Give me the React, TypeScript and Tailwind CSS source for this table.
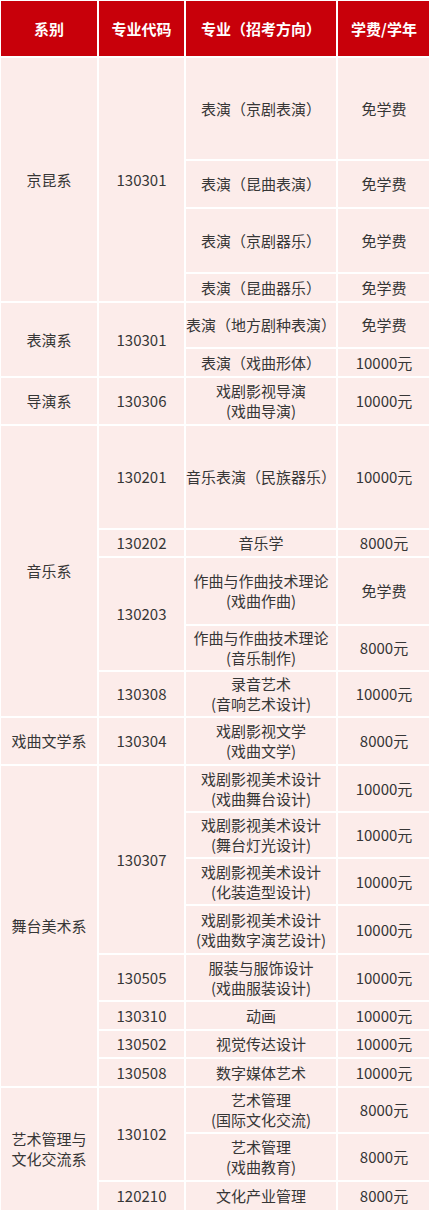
import * as React from "react";

type Cell = { text: string[]; span?: number };
type Row = { h: number; dept?: Cell; code?: Cell; major: string[]; fee: string };

const rows: Row[] = [
  { h: 103, dept: { text: ["京昆系"], span: 4 }, code: { text: ["130301"], span: 4 }, major: ["表演（京剧表演）"], fee: "免学费" },
  { h: 48, major: ["表演（昆曲表演）"], fee: "免学费" },
  { h: 65, major: ["表演（京剧器乐）"], fee: "免学费" },
  { h: 29, major: ["表演（昆曲器乐）"], fee: "免学费" },
  { h: 46, dept: { text: ["表演系"], span: 2 }, code: { text: ["130301"], span: 2 }, major: ["表演（地方剧种表演）"], fee: "免学费" },
  { h: 29, major: ["表演（戏曲形体）"], fee: "10000元" },
  { h: 48, dept: { text: ["导演系"] }, code: { text: ["130306"] }, major: ["戏剧影视导演", "(戏曲导演)"], fee: "10000元" },
  { h: 104, dept: { text: ["音乐系"], span: 5 }, code: { text: ["130201"] }, major: ["音乐表演（民族器乐）"], fee: "10000元" },
  { h: 28, code: { text: ["130202"] }, major: ["音乐学"], fee: "8000元" },
  { h: 68, code: { text: ["130203"], span: 2 }, major: ["作曲与作曲技术理论", "(戏曲作曲)"], fee: "免学费" },
  { h: 46, major: ["作曲与作曲技术理论", "(音乐制作)"], fee: "8000元" },
  { h: 46, code: { text: ["130308"] }, major: ["录音艺术", "(音响艺术设计)"], fee: "10000元" },
  { h: 48, dept: { text: ["戏曲文学系"] }, code: { text: ["130304"] }, major: ["戏剧影视文学", "(戏曲文学)"], fee: "8000元" },
  { h: 47, dept: { text: ["舞台美术系"], span: 8 }, code: { text: ["130307"], span: 4 }, major: ["戏剧影视美术设计", "(戏曲舞台设计)"], fee: "10000元" },
  { h: 46, major: ["戏剧影视美术设计", "(舞台灯光设计)"], fee: "10000元" },
  { h: 47, major: ["戏剧影视美术设计", "(化装造型设计)"], fee: "10000元" },
  { h: 49, major: ["戏剧影视美术设计", "(戏曲数字演艺设计)"], fee: "10000元" },
  { h: 47, code: { text: ["130505"] }, major: ["服装与服饰设计", "(戏曲服装设计)"], fee: "10000元" },
  { h: 29, code: { text: ["130310"] }, major: ["动画"], fee: "10000元" },
  { h: 28, code: { text: ["130502"] }, major: ["视觉传达设计"], fee: "10000元" },
  { h: 29, code: { text: ["130508"] }, major: ["数字媒体艺术"], fee: "10000元" },
  { h: 46, dept: { text: ["艺术管理与", "文化交流系"], span: 3 }, code: { text: ["130102"], span: 2 }, major: ["艺术管理", "(国际文化交流)"], fee: "8000元" },
  { h: 48, major: ["艺术管理", "(戏曲教育)"], fee: "8000元" },
  { h: 30, code: { text: ["120210"] }, major: ["文化产业管理"], fee: "8000元" },
];

const td = "border-2 border-white text-center align-middle p-0 leading-[20px]";

const Lines = ({ lines }: { lines: string[] }) => (
  <>
    {lines.map((l, i) => (
      <div key={i} className="whitespace-nowrap">{l}</div>
    ))}
  </>
);

export default function App() {
  return (
    <div
      className="w-[429px] bg-white overflow-hidden pb-[3px]"
      style={{ fontFamily: '"Noto Sans CJK SC", "Noto Sans", sans-serif' }}
    >
      <table className="table-fixed border-collapse w-[431px] -ml-px -mt-px text-[15px] text-[#363636] bg-[#fcecea]">
        <colgroup>
          <col className="w-[98px]" />
          <col className="w-[87px]" />
          <col className="w-[152px]" />
          <col className="w-[94px]" />
        </colgroup>
        <thead>
          <tr className="h-[57px] bg-[#c8000a] text-white font-bold">
            <th className={td}>系别</th>
            <th className={td}>专业代码</th>
            <th className={td}>专业（招考方向）</th>
            <th className={td}>学费/学年</th>
          </tr>
        </thead>
        <tbody>
          {rows.map((r, i) => (
            <tr key={i} style={{ height: r.h }}>
              {r.dept && (
                <td className={td} rowSpan={r.dept.span ?? 1}>
                  <Lines lines={r.dept.text} />
                </td>
              )}
              {r.code && (
                <td className={td} rowSpan={r.code.span ?? 1}>
                  <Lines lines={r.code.text} />
                </td>
              )}
              <td className={td}>
                <Lines lines={r.major} />
              </td>
              <td className={td}>{r.fee}</td>
            </tr>
          ))}
        </tbody>
      </table>
    </div>
  );
}
